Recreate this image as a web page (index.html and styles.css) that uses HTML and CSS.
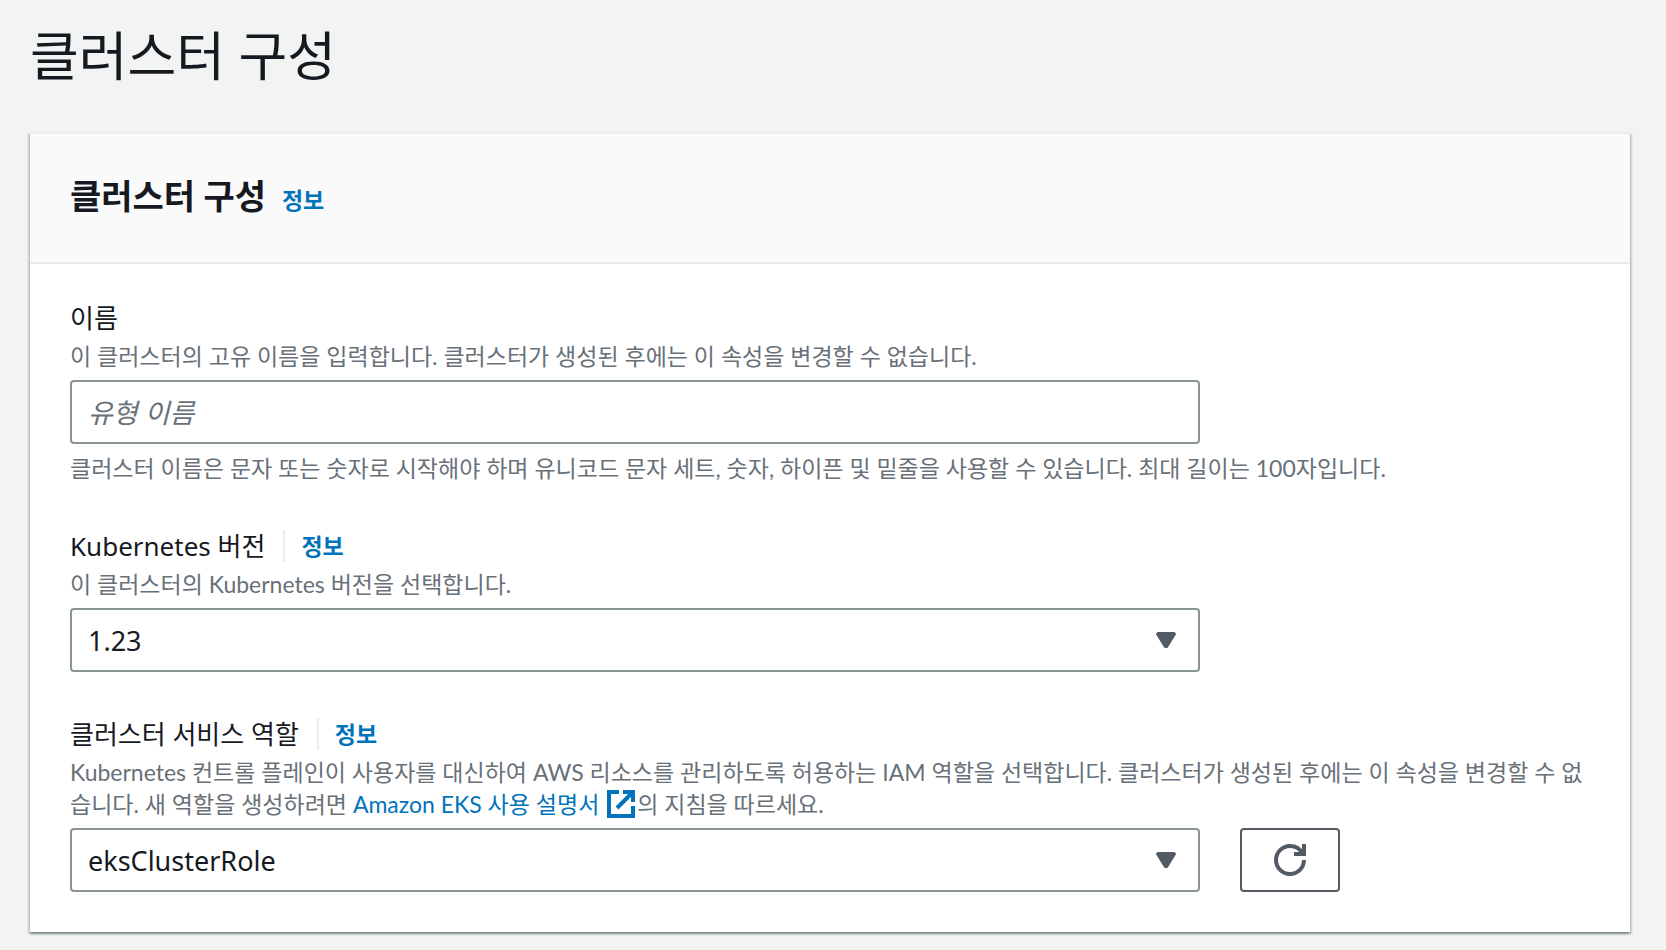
FILE: index.html
```html
<!DOCTYPE html>
<html lang="ko">
<head>
<meta charset="utf-8">
<meta name="viewport" content="width=device-width, initial-scale=1">
<title>클러스터 구성</title>
<link rel="stylesheet" href="styles.css">
</head>
<body>
<main class="page">
  <h1 class="page-title">클러스터 구성</h1>
  <form class="panel">
    <header class="panel-header">
      <h2 class="panel-title">클러스터 구성</h2>
      <a class="info" href="#">정보</a>
    </header>
    <div class="panel-body">
      <div class="field">
        <div class="label-row">
          <label class="label" for="name">이름</label>
        </div>
        <p class="description" id="name-desc">이 클러스터의 고유 이름을 입력합니다. 클러스터가 생성된 후에는 이 속성을 변경할 수 없습니다.</p>
        <div class="controls">
          <div class="control">
            <input class="box" type="text" id="name" placeholder="유형 이름" aria-describedby="name-desc name-hint">
          </div>
        </div>
        <p class="description hint" id="name-hint">클러스터 이름은 문자 또는 숫자로 시작해야 하며 유니코드 문자 세트, 숫자, 하이픈 및 밑줄을 사용할 수 있습니다. 최대 길이는 100자입니다.</p>
      </div>

      <div class="field">
        <div class="label-row">
          <label class="label" for="version">Kubernetes 버전</label>
          <a class="info info-divided" href="#">정보</a>
        </div>
        <p class="description" id="version-desc">이 클러스터의 Kubernetes 버전을 선택합니다.</p>
        <div class="controls">
          <div class="control">
            <select class="box" id="version" aria-describedby="version-desc">
              <option>1.23</option>
            </select>
            <svg class="caret" viewBox="0 0 20 16" aria-hidden="true"><path d="M2 1h16l1 1-8 13H9L1 2z"/></svg>
          </div>
        </div>
      </div>

      <div class="field">
        <div class="label-row">
          <label class="label" for="role">클러스터 서비스 역할</label>
          <a class="info info-divided" href="#">정보</a>
        </div>
        <p class="description" id="role-desc">Kubernetes 컨트롤 플레인이 사용자를 대신하여 AWS 리소스를 관리하도록 허용하는 IAM 역할을 선택합니다. 클러스터가 생성된 후에는 이 속성을 변경할 수 없습니다. 새 역할을 생성하려면 <a class="link" href="#">Amazon EKS 사용 설명서 <svg class="external" viewBox="0 0 28 28" aria-hidden="true"><path d="M12 2H2v24h24V16"/><path d="M16 2h10v10M26 2 10 18"/></svg></a>의 지침을 따르세요.</p>
        <div class="controls">
          <div class="control">
            <select class="box" id="role" aria-describedby="role-desc">
              <option>eksClusterRole</option>
            </select>
            <svg class="caret" viewBox="0 0 20 16" aria-hidden="true"><path d="M2 1h16l1 1-8 13H9L1 2z"/></svg>
          </div>
          <button class="refresh" type="button" aria-label="새로 고침">
            <svg class="refresh-icon" viewBox="0 0 16 16" aria-hidden="true"><path d="M15 8c0 3.87-3.13 7-7 7s-7-3.13-7-7 3.13-7 7-7c2.79 0 5.2 1.63 6.33 4"/><path d="M10 5h5V0"/></svg>
          </button>
        </div>
      </div>
    </div>
  </form>
</main>
</body>
</html>
```
FILE: styles.css
```css
* {
  box-sizing: border-box;
}

body {
  margin: 0;
  background: #f2f3f3;
  color: #16191f;
  font-family: Lato, "Noto Sans CJK KR", sans-serif;
  font-size: 23px;
  line-height: 32px;
}

.page {
  padding: 20px 36px 16px 30px;
}

.page-title {
  margin: 0 0 40px;
  font-size: 53px;
  font-weight: 400;
  line-height: 72px;
}

.panel {
  background: #fff;
  border-top: 2px solid #eaeded;
  box-shadow:
    0 2px 2px rgba(0, 28, 36, 0.3),
    2px 2px 2px rgba(0, 28, 36, 0.15),
    -2px 2px 2px rgba(0, 28, 36, 0.15);
}

.panel-header {
  display: flex;
  align-items: baseline;
  gap: 16px;
  padding: 38px 40px 42px;
  background: #fafafa;
  border-bottom: 2px solid #eaeded;
}

.panel-title {
  margin: 0;
  font-size: 34px;
  font-weight: 700;
  line-height: 48px;
}

.info {
  color: #0073bb;
  font-weight: 700;
  text-decoration: none;
}

.info-divided {
  padding-left: 16px;
  border-left: 2px solid #eaeded;
}

.panel-body {
  display: flex;
  flex-direction: column;
  gap: 40px;
  padding: 32px 40px 40px;
}

.label-row {
  display: flex;
  align-items: center;
  gap: 18px;
  height: 44px;
}

.label {
  font-family: "Noto Sans", "Noto Sans CJK KR", sans-serif;
  font-size: 26px;
}

.description {
  margin: 0;
  color: #687078;
}

.hint {
  margin-top: 8px;
}

.controls {
  display: grid;
  grid-template-columns: repeat(4, minmax(0, 1fr));
  gap: 40px;
  margin-top: 8px;
}

.control {
  position: relative;
  grid-column: span 3;
}

.box {
  display: block;
  width: 100%;
  height: 64px;
  padding: 0 16px;
  border: 2px solid #879596;
  border-radius: 4px;
  background: #fff;
  color: #16191f;
  font-family: "Noto Sans", "Noto Sans CJK KR", sans-serif;
  font-size: 27px;
  appearance: none;
}

.box::placeholder {
  color: #687078;
  font-style: italic;
  opacity: 1;
}

.caret {
  position: absolute;
  top: 24px;
  right: 24px;
  width: 20px;
  height: 16px;
  fill: #545b64;
  stroke: #545b64;
  stroke-width: 2;
  stroke-linejoin: round;
  pointer-events: none;
}

.link {
  color: #0073bb;
  text-decoration: none;
}

.external {
  width: 28px;
  height: 28px;
  margin: 0 2px;
  vertical-align: -5px;
  fill: none;
  stroke: currentColor;
  stroke-width: 4;
}

.refresh {
  display: flex;
  align-items: center;
  justify-content: center;
  width: 100px;
  height: 64px;
  padding: 0;
  border: 2px solid #545b64;
  border-radius: 4px;
  background: #fff;
  color: #545b64;
}

.refresh-icon {
  width: 32px;
  height: 32px;
  fill: none;
  stroke: currentColor;
  stroke-width: 2;
}
```
